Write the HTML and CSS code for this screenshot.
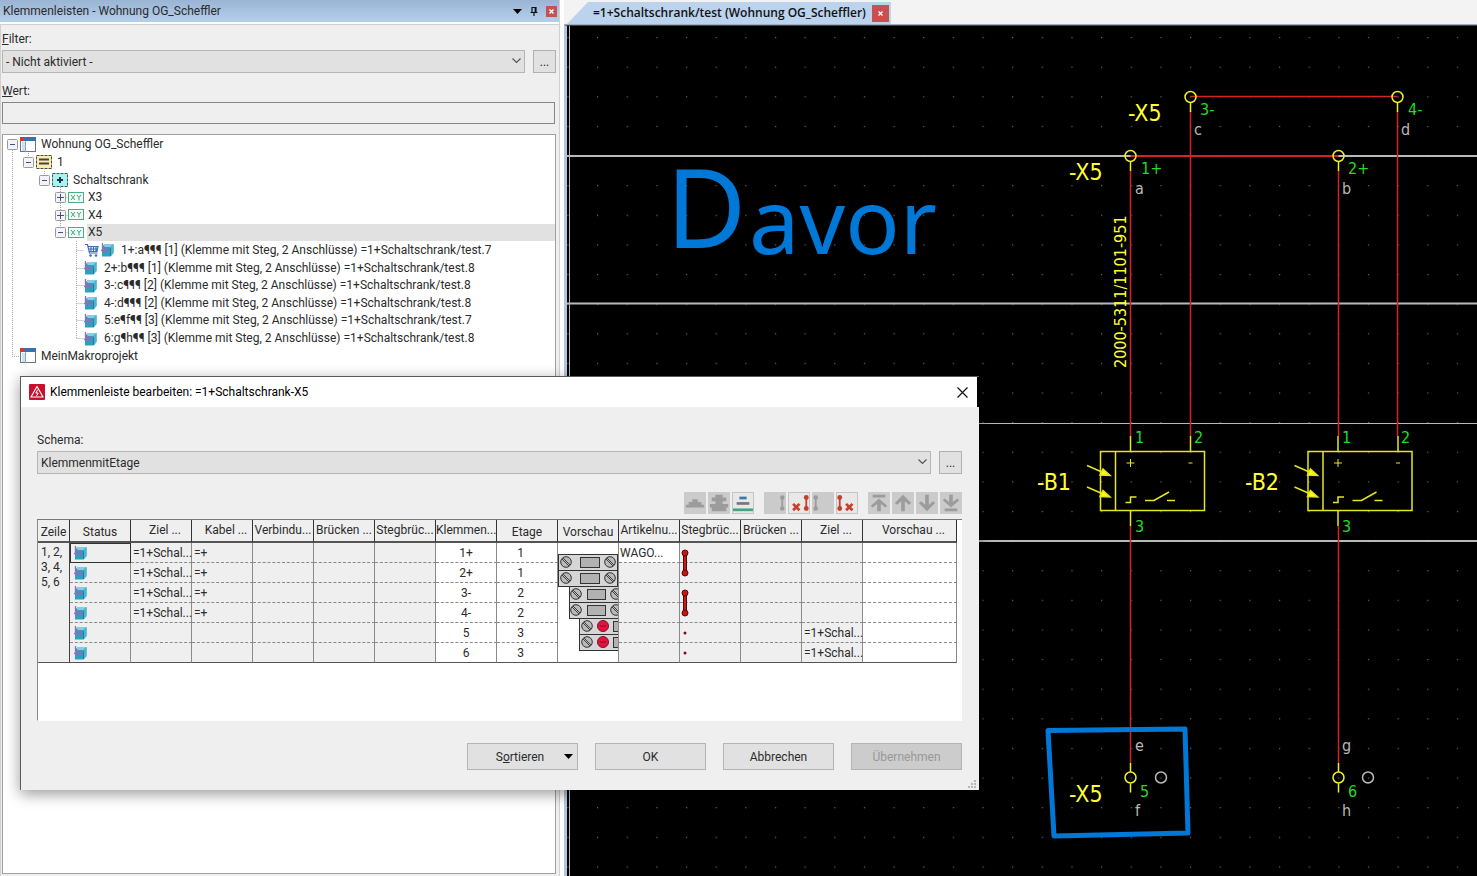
FILE: index.html
```html
<!DOCTYPE html>
<html lang="de">
<head>
    <meta charset="UTF-8">
    <meta name="viewport" content="width=device-width, initial-scale=1.0">
    <title>Klemmenleisten - Wohnung OG_Scheffler</title>
    <link rel="stylesheet" href="styles.css">
</head>
<body>
    <!-- Shared icons -->
    <svg class="sprite" aria-hidden="true">
        <symbol id="i-project" viewBox="0 0 16 16">
            <rect x="0.5" y="0.5" width="15" height="14" fill="#fff" stroke="#667686"/>
            <rect x="0" y="0" width="16" height="4" fill="#3a70ab"/>
            <rect x="0" y="0" width="4" height="4" fill="#d8392f"/>
            <rect x="2" y="5" width="3" height="9" fill="#cfe0f0"/>
            <path d="M5.5 4v11" stroke="#8fa6bb"/>
        </symbol>
        <symbol id="i-plant" viewBox="0 0 16 14">
            <rect x="0.5" y="0.5" width="15" height="13" fill="#fbedb0" stroke="#4c4c3c" stroke-dasharray="3 1"/>
            <path d="M3 4.500h10M3 8.500h10" stroke="#444" stroke-width="2"/>
        </symbol>
        <symbol id="i-place" viewBox="0 0 16 14">
            <rect x="0.500" y="0.500" width="15" height="13" fill="#a5f3f3" stroke="#3c5a5a" stroke-dasharray="3 1"/>
            <path d="M8 4v6M5 7h6" stroke="#234" stroke-width="2"/>
        </symbol>
        <symbol id="i-strip" viewBox="0 0 16 12">
            <rect x="0.500" y="0.500" width="15" height="10" fill="#f2fbf6" stroke="#45b083"/>
            <path d="M3 3l4 5M7 3l-4 5M9 3l2 2.500l2-2.500M11 5.500v3" stroke="#45a07b" fill="none"/>
        </symbol>
        <symbol id="i-block" viewBox="0 0 13 14">
            <path d="M1 4l3-3h8.500v9l-3 3.500H1z" fill="#2f9fc0"/>
            <path d="M4 1h8.500l-3 3H1z" fill="#7fd0e4"/>
            <path d="M9.500 4l3-3v9l-3 3.500z" fill="#4db5d2"/>
            <path d="M9.500 5v8" stroke="#1f7f9f"/>
            <path d="M1.500 0v8M0 7.500h8M4 4v5M6.500 4v5M1 2l3 3" stroke="#8a70b4" stroke-width="1.300" fill="none"/>
        </symbol>
        <symbol id="i-cart" viewBox="0 0 14 14">
            <path d="M0 1.500h2.500l2 8.500h8M3 3.500h10l-1 5H4.500M4 6h8.500M6 3.500v5M8.500 3.500v5M11 3.500v5" stroke="#3c6eb4" fill="none" stroke-width="1.200"/>
            <circle cx="5.500" cy="12.500" r="1.300" fill="#3c6eb4"/>
            <circle cx="11" cy="12.500" r="1.300" fill="#3c6eb4"/>
        </symbol>
        <symbol id="i-minus" viewBox="0 0 11 11">
            <rect x="0.500" y="0.500" width="10" height="10" rx="1" fill="#f4f4f4" stroke="#999"/>
            <path d="M3 5.500h5" stroke="#3d4f96"/>
        </symbol>
        <symbol id="i-plus" viewBox="0 0 11 11">
            <rect x="0.500" y="0.500" width="10" height="10" rx="1" fill="#f4f4f4" stroke="#999"/>
            <path d="M2 5.500h7M5.500 2v7" stroke="#3d4f96"/>
        </symbol>
        <symbol id="i-chevron" viewBox="0 0 9 6">
            <path d="M0.500 0.500l4 4l4-4" fill="none" stroke="#555" stroke-width="1.200"/>
        </symbol>
        <symbol id="i-screw" viewBox="0 0 12 12">
            <circle cx="6" cy="6" r="5.300" fill="#b9b9b9" stroke="#333"/>
            <path d="M2 3l7 7M3 2l7 7" stroke="#333" stroke-width="0.900"/>
        </symbol>
        <symbol id="i-bridge" viewBox="0 0 8 28">
            <path d="M4 4v20" stroke="#4a0808" stroke-width="4"/>
            <path d="M4 4v20" stroke="#d01616" stroke-width="2"/>
            <circle cx="4" cy="4" r="3" fill="#c81414" stroke="#5a0808"/>
            <circle cx="4" cy="24" r="3" fill="#c81414" stroke="#5a0808"/>
        </symbol>
        <symbol id="i-dot" viewBox="0 0 4 4">
            <circle cx="2" cy="2" r="1.500" fill="#7c0c18"/>
        </symbol>
    </svg>

    <aside class="panel">
        <header class="panel-title">
            <h2>Klemmenleisten - Wohnung OG_Scheffler</h2>
            <button type="button" class="title-btn" aria-label="Menü">
                <svg width="9" height="5" viewBox="0 0 9 5"><path d="M0 0h9L4.500 5z" fill="#000"/></svg>
            </button>
            <button type="button" class="title-btn" aria-label="Anheften">
                <svg width="8" height="9" viewBox="0 0 8 9"><path d="M2 5V0.500h4V5M5.200 0.500V5M0.500 5.500h7M4 5.500V9" stroke="#111" stroke-width="1.200" fill="none"/></svg>
            </button>
            <button type="button" class="close-red" aria-label="Schließen">
                <svg width="5" height="5" viewBox="0 0 5 5"><path d="M0.500 0.500l4 4M4.500 0.500l-4 4" stroke="#fff" stroke-width="1.400"/></svg>
            </button>
        </header>
        <div class="panel-body">
            <label for="filter"><u>F</u>ilter:</label>
            <div class="select-row">
                <div class="select">
                    <select id="filter">
                        <option>- Nicht aktiviert -</option>
                    </select>
                    <svg class="chevron" width="9" height="6"><use href="#i-chevron"/></svg>
                </div>
                <button type="button" class="more">...</button>
            </div>
            <label for="wert" class="wert-label"><u>W</u>ert:</label>
            <input type="text" id="wert" class="wert">

            <div class="tree">
                <svg class="tree-lines" width="90" height="228" viewBox="0 0 90 228">
                    <path d="M9.500 15v206.500h8M25.500 18v4M41.500 36v4M57.500 52v42M73.500 106v98M73.500 115.500h8M73.500 133.500h8M73.500 150.500h8M73.500 168.500h8M73.500 185.500h8M73.500 203.500h8M57.500 62.500h8M57.500 80.500h8M57.500 97.500h8" fill="none" stroke="#aaa" stroke-dasharray="1 1"/>
                </svg>
                <ul>
                    <li><svg class="exp"><use href="#i-minus"/></svg><svg class="ico"><use href="#i-project"/></svg><span>Wohnung OG_Scheffler</span></li>
                    <li class="d1"><svg class="exp"><use href="#i-minus"/></svg><svg class="ico"><use href="#i-plant"/></svg><span>1</span></li>
                    <li class="d2"><svg class="exp"><use href="#i-minus"/></svg><svg class="ico"><use href="#i-place"/></svg><span>Schaltschrank</span></li>
                    <li class="d3"><svg class="exp"><use href="#i-plus"/></svg><svg class="ico"><use href="#i-strip"/></svg><span>X3</span></li>
                    <li class="d3"><svg class="exp"><use href="#i-plus"/></svg><svg class="ico"><use href="#i-strip"/></svg><span>X4</span></li>
                    <li class="d3 selected"><svg class="exp"><use href="#i-minus"/></svg><svg class="ico"><use href="#i-strip"/></svg><span>X5</span></li>
                    <li class="leaf"><svg class="cart"><use href="#i-cart"/></svg><svg class="block"><use href="#i-block"/></svg><span>1+:a¶¶¶ [1] (Klemme mit Steg, 2 Anschlüsse) =1+Schaltschrank/test.7</span></li>
                    <li class="leaf"><svg class="block"><use href="#i-block"/></svg><span>2+:b¶¶¶ [1] (Klemme mit Steg, 2 Anschlüsse) =1+Schaltschrank/test.8</span></li>
                    <li class="leaf"><svg class="block"><use href="#i-block"/></svg><span>3-:c¶¶¶ [2] (Klemme mit Steg, 2 Anschlüsse) =1+Schaltschrank/test.8</span></li>
                    <li class="leaf"><svg class="block"><use href="#i-block"/></svg><span>4-:d¶¶¶ [2] (Klemme mit Steg, 2 Anschlüsse) =1+Schaltschrank/test.8</span></li>
                    <li class="leaf"><svg class="block"><use href="#i-block"/></svg><span>5:e¶f¶¶ [3] (Klemme mit Steg, 2 Anschlüsse) =1+Schaltschrank/test.7</span></li>
                    <li class="leaf"><svg class="block"><use href="#i-block"/></svg><span>6:g¶h¶¶ [3] (Klemme mit Steg, 2 Anschlüsse) =1+Schaltschrank/test.8</span></li>
                    <li class="closed"><svg class="ico"><use href="#i-project"/></svg><span>MeinMakroprojekt</span></li>
                </ul>
            </div>
        </div>
    </aside>

    <main class="editor">
        <div class="tabs">
            <div class="tab">
                <span>=1+Schaltschrank/test (Wohnung OG_Scheffler)</span>
                <button type="button" class="close-red tab-close" aria-label="Tab schließen">
                    <svg width="5" height="5" viewBox="0 0 5 5"><path d="M0.500 0.500l4 4M4.500 0.500l-4 4" stroke="#fff" stroke-width="1.200"/></svg>
                </button>
            </div>
        </div>
        <div class="canvas">
            <svg class="drawing" width="100%" height="100%">
                <defs>
                    <pattern id="grid" x="597" y="37" width="29.650" height="29.620" patternUnits="userSpaceOnUse">
                        <rect width="1.200" height="1.200" fill="#6a6a6a"/>
                    </pattern>
                    <g id="sensor" fill="none" stroke="#e6e61e" stroke-width="1.500">
                        <rect x="1100.500" y="451.500" width="104" height="59"/>
                        <path d="M1115.500 451v60M1130.500 436v15M1190.500 436v15M1130.500 511v15"/>
                        <path d="M1126.500 463h8M1130.500 459v8M1188.500 463h4" stroke-width="1"/>
                        <path d="M1125.500 502.500h5v-5.500h6M1145 500.500h9l15-8.500M1167 500.500h8"/>
                        <path d="M1087 465.500l16 7M1087 487l16 7"/>
                        <path d="M1103 469l7 6.500l-10-0.500zM1103 490.500l7 6.500l-10-0.500z" fill="#ff0"/>
                    </g>
                    <g id="pin" fill="none" stroke="#f0f028" stroke-width="1.500">
                        <circle r="5.500"/>
                        <path d="M0 6v9"/>
                    </g>
                </defs>
                <g transform="translate(-567 -26)">
                    <rect x="567" y="26" width="100%" height="100%" fill="url(#grid)"/>
                    <g class="rails">
                        <path d="M567 156h3000M567 303.500h3000M567 541h3000" stroke-width="2"/>
                        <path d="M567 423.500h3000M569.500 26v3000"/>
                    </g>
                    <g class="wires">
                        <path d="M1190.500 96.500h207"/>
                        <path d="M1130.500 156h208" stroke-width="2"/>
                        <path d="M1130.500 171v265M1190.500 111v325M1338.500 171v265M1397.500 111v325M1130.500 526v237M1338.500 526v237"/>
                    </g>
                    <g class="pins">
                        <use href="#pin" x="1190.500" y="97"/>
                        <use href="#pin" x="1397.500" y="97"/>
                        <use href="#pin" x="1130.500" y="156"/>
                        <use href="#pin" x="1338.500" y="156"/>
                        <use href="#pin" x="1130.500" y="777.500"/>
                        <use href="#pin" x="1338.500" y="777.500"/>
                        <path d="M1130.500 763v9M1338.500 763v9"/>
                        <circle cx="1161" cy="777.500" r="5.500"/>
                        <circle cx="1368" cy="777.500" r="5.500"/>
                    </g>
                    <use href="#sensor"/>
                    <use href="#sensor" x="207.500"/>
                    <g class="tags">
                        <text x="1128" y="121">-X5</text>
                        <text x="1069" y="180">-X5</text>
                        <text x="1037" y="490">-B1</text>
                        <text x="1245" y="490">-B2</text>
                        <text x="1069" y="802">-X5</text>
                        <text class="part" transform="translate(1126 368) rotate(-90)">2000-5311/1101-951</text>
                    </g>
                    <g class="numbers">
                        <text x="1200" y="115">3-</text>
                        <text x="1408" y="115">4-</text>
                        <text x="1141" y="174">1+</text>
                        <text x="1348" y="174">2+</text>
                        <text x="1135" y="443">1</text>
                        <text x="1194" y="443">2</text>
                        <text x="1342" y="443">1</text>
                        <text x="1401" y="443">2</text>
                        <text x="1135" y="532">3</text>
                        <text x="1342" y="532">3</text>
                        <text x="1140" y="797">5</text>
                        <text x="1348" y="797">6</text>
                    </g>
                    <g class="letters">
                        <text x="1194" y="135">c</text>
                        <text x="1401" y="135">d</text>
                        <text x="1135" y="194">a</text>
                        <text x="1342" y="194">b</text>
                        <text x="1135" y="751">e</text>
                        <text x="1342" y="751">g</text>
                        <text x="1135" y="816">f</text>
                        <text x="1342" y="816">h</text>
                    </g>
                    <path class="marker" d="M1048 730.500L1185 729l3 104l-134 3z"/>
                    <text class="note" x="666" y="248">D<tspan class="note-small" x="749" y="254">avor</tspan></text>
                </g>
            </svg>
        </div>
    </main>

    <section class="dialog" role="dialog" aria-labelledby="dialog-title">
        <header class="dialog-title">
            <svg width="16" height="16" viewBox="0 0 16 16">
                <rect width="16" height="16" rx="1" fill="#c8102e"/>
                <path d="M8 2.500l6 10.500H2z" fill="none" stroke="#fff" stroke-width="1.100"/>
                <path d="M8.800 5.500l-2 3.500h2.400l-1.700 3" fill="none" stroke="#fff"/>
            </svg>
            <h1 id="dialog-title">Klemmenleiste bearbeiten: =1+Schaltschrank-X5</h1>
            <button type="button" class="title-btn" aria-label="Schließen">
                <svg width="11" height="11" viewBox="0 0 11 11"><path d="M0.500 0.500l10 10M10.500 0.500l-10 10" stroke="#111" stroke-width="1.200"/></svg>
            </button>
        </header>
        <div class="dialog-body">
            <label for="schema">Schema:</label>
            <div class="select-row">
                <div class="select">
                    <select id="schema">
                        <option>KlemmenmitEtage</option>
                    </select>
                    <svg class="chevron" width="9" height="6"><use href="#i-chevron"/></svg>
                </div>
                <button type="button" class="more">...</button>
            </div>

            <div class="toolbar">
                <div class="group">
                    <button type="button" aria-label="Etage" disabled><svg viewBox="0 0 22 22"><path d="M1 13h20v3H1zM4 10h14v3H4zM8 7h6v3H8z"/></svg></button>
                    <button type="button" aria-label="Etagen" disabled><svg viewBox="0 0 22 22"><path d="M7 2h8v3h4v4h-4v3h6v4h-2v4H3v-4H1v-4h6V9H3V5h4z"/></svg></button>
                    <button type="button" aria-label="Mehrstock"><svg viewBox="0 0 22 22"><path d="M7 4h8v3H7z" fill="#3a78b0"/><path d="M4 10h14v3H4z" fill="#777"/><path d="M0 17h22v3H0z" fill="#3fa684"/></svg></button>
                </div>
                <div class="group">
                    <button type="button" aria-label="Brücke links" disabled><svg viewBox="0 0 22 22"><circle cx="19" cy="5" r="2.500"/><circle cx="19" cy="17" r="2.500"/><path d="M18 5h2v12h-2z"/></svg></button>
                    <button type="button" aria-label="Brücke links löschen"><svg viewBox="0 0 22 22" fill="#c4402c"><circle cx="19" cy="5" r="2.700"/><circle cx="19" cy="17" r="2.700"/><path d="M18 5h2v12h-2z"/><path d="M4.500 12l7 7M11.500 12l-7 7" stroke="#c4402c" stroke-width="3"/></svg></button>
                    <button type="button" aria-label="Brücke rechts" disabled><svg viewBox="0 0 22 22"><circle cx="3" cy="5" r="2.500"/><circle cx="3" cy="17" r="2.500"/><path d="M2 5h2v12H2z"/></svg></button>
                    <button type="button" aria-label="Brücke rechts löschen"><svg viewBox="0 0 22 22" fill="#c4402c"><circle cx="3" cy="5" r="2.700"/><circle cx="3" cy="17" r="2.700"/><path d="M2 5h2v12H2z"/><path d="M10 12l7 7M17 12l-7 7" stroke="#c4402c" stroke-width="3"/></svg></button>
                </div>
                <div class="group">
                    <button type="button" aria-label="Ganz nach oben" disabled><svg viewBox="0 0 22 22"><path d="M4 2h14v3H4zM11 6l9 8l-2 2l-5-4v8H9v-8l-5 4l-2-2z"/></svg></button>
                    <button type="button" aria-label="Nach oben" disabled><svg viewBox="0 0 22 22"><path d="M11 2l9 9l-2.500 2l-4.500-4v11H9V9l-4.500 4L2 11z"/></svg></button>
                    <button type="button" aria-label="Nach unten" disabled><svg viewBox="0 0 22 22"><path d="M11 20l9-9l-2.500-2l-4.500 4V2H9v11L4.500 9L2 11z"/></svg></button>
                    <button type="button" aria-label="Ganz nach unten" disabled><svg viewBox="0 0 22 22"><path d="M4 17h14v3H4zM11 16l9-8l-2-2l-5 4V2H9v8L4 6L2 8z"/></svg></button>
                </div>
            </div>

            <div class="table-box">
                <table>
                    <colgroup>
                        <col class="c-line"><col span="13" class="c-std"><col>
                    </colgroup>
                    <thead>
                        <tr>
                            <th class="one">Zeile</th>
                            <th class="one">Status</th>
                            <th class="short">Ziel ...</th>
                            <th class="short">Kabel ...</th>
                            <th>Verbindu...</th>
                            <th>Brücken ...</th>
                            <th>Stegbrüc...</th>
                            <th>Klemmen...</th>
                            <th class="one">Etage</th>
                            <th class="one">Vorschau</th>
                            <th>Artikelnu...</th>
                            <th>Stegbrüc...</th>
                            <th>Brücken ...</th>
                            <th class="short">Ziel ...</th>
                            <th class="short">Vorschau ...</th>
                        </tr>
                    </thead>
                    <tbody>
                        <tr>
                            <td class="lines" rowspan="6">1, 2,<br>3, 4,<br>5, 6</td>
                            <td class="focus"><svg class="block"><use href="#i-block"/></svg></td><td>=1+Schal...</td><td>=+</td><td></td><td></td><td></td>
                            <td class="num">1+</td><td class="num level">1</td>
                            <td class="preview" rowspan="6">
                                <svg width="60" height="118" viewBox="0 0 60 118">
                                    <g fill="#d6d6d6" stroke="#333">
                                        <rect x="0.500" y="11.500" width="59" height="16"/>
                                        <rect x="0.500" y="27.500" width="59" height="16"/>
                                        <rect x="11.500" y="43.500" width="59" height="16"/>
                                        <rect x="11.500" y="59.500" width="59" height="16"/>
                                        <rect x="21.500" y="75.500" width="59" height="16"/>
                                        <rect x="21.500" y="91.500" width="59" height="16"/>
                                    </g>
                                    <g fill="#b2b2b2" stroke="#333">
                                        <rect x="22.500" y="14.500" width="19" height="10"/>
                                        <rect x="22.500" y="30.500" width="19" height="10"/>
                                        <rect x="29.500" y="46.500" width="18" height="10"/>
                                        <rect x="29.500" y="62.500" width="18" height="10"/>
                                        <rect x="55.500" y="78.500" width="18" height="10"/>
                                        <rect x="55.500" y="94.500" width="18" height="10"/>
                                    </g>
                                    <g>
                                        <use href="#i-screw" x="2" y="13" width="12" height="12"/><use href="#i-screw" x="46" y="13" width="12" height="12"/>
                                        <use href="#i-screw" x="2" y="29" width="12" height="12"/><use href="#i-screw" x="46" y="29" width="12" height="12"/>
                                        <use href="#i-screw" x="12" y="45" width="12" height="12"/><use href="#i-screw" x="52" y="45" width="12" height="12"/>
                                        <use href="#i-screw" x="12" y="61" width="12" height="12"/><use href="#i-screw" x="52" y="61" width="12" height="12"/>
                                        <use href="#i-screw" x="23" y="77" width="12" height="12"/>
                                        <use href="#i-screw" x="23" y="93" width="12" height="12"/>
                                    </g>
                                    <g fill="#e0143c" stroke="#8a0c24">
                                        <circle cx="45" cy="83" r="5.500"/><path d="M42 83h6"/>
                                        <circle cx="45" cy="99" r="5.500"/><path d="M42 99h6"/>
                                    </g>
                                </svg>
                            </td>
                            <td class="open">WAGO...</td>
                            <td class="bridge"><svg width="8" height="28"><use href="#i-bridge"/></svg></td>
                            <td></td><td></td><td class="open"></td>
                        </tr>
                        <tr>
                            <td><svg class="block"><use href="#i-block"/></svg></td><td>=1+Schal...</td><td>=+</td><td></td><td></td><td></td>
                            <td class="num">2+</td><td class="num level">1</td><td></td><td></td><td></td><td></td><td class="open"></td>
                        </tr>
                        <tr>
                            <td><svg class="block"><use href="#i-block"/></svg></td><td>=1+Schal...</td><td>=+</td><td></td><td></td><td></td>
                            <td class="num">3-</td><td class="num level">2</td><td></td>
                            <td class="bridge"><svg width="8" height="28"><use href="#i-bridge"/></svg></td>
                            <td></td><td></td><td class="open"></td>
                        </tr>
                        <tr>
                            <td><svg class="block"><use href="#i-block"/></svg></td><td>=1+Schal...</td><td>=+</td><td></td><td></td><td></td>
                            <td class="num">4-</td><td class="num level">2</td><td></td><td></td><td></td><td></td><td class="open"></td>
                        </tr>
                        <tr>
                            <td><svg class="block"><use href="#i-block"/></svg></td><td></td><td></td><td></td><td></td><td></td>
                            <td class="num">5</td><td class="num level">3</td><td></td>
                            <td><svg class="dot"><use href="#i-dot"/></svg></td><td></td><td>=1+Schal...</td><td class="open"></td>
                        </tr>
                        <tr>
                            <td><svg class="block"><use href="#i-block"/></svg></td><td></td><td></td><td></td><td></td><td></td>
                            <td class="num">6</td><td class="num level">3</td><td></td>
                            <td><svg class="dot"><use href="#i-dot"/></svg></td><td></td><td>=1+Schal...</td><td class="open"></td>
                        </tr>
                    </tbody>
                </table>
            </div>

            <footer class="actions">
                <button type="button" class="btn sort">
                    <span>S<u>o</u>rtieren</span>
                    <svg width="9" height="5" viewBox="0 0 9 5"><path d="M0 0h9L4.500 5z" fill="#000"/></svg>
                </button>
                <button type="button" class="btn">OK</button>
                <button type="button" class="btn">Abbrechen</button>
                <button type="button" class="btn" disabled>Übernehmen</button>
            </footer>
        </div>
        <svg class="grip" width="9" height="9" viewBox="0 0 9 9"><path d="M6 0h2v2H6zM3 3h2v2H3zM6 3h2v2H6zM0 6h2v2H0zM3 6h2v2H3zM6 6h2v2H6z" fill="#b8b8b8"/></svg>
    </section>
</body>
</html>
```

FILE: styles.css
```css
* {
    margin: 0;
    padding: 0;
    box-sizing: border-box;
}
body {
    display: flex;
    min-height: 100vh;
    position: relative;
    overflow: hidden;
    background: #fff;
    color: #2b2b2b;
    font-family: Roboto, "Noto Sans", sans-serif;
    font-size: 12px;
    line-height: 16px;
}
button, input, select {
    font: inherit;
    color: inherit;
}
svg {
    display: block;
    flex: none;
}
.sprite {
    position: absolute;
    width: 0;
    height: 0;
}
h1, h2 {
    font-size: 12px;
    font-weight: normal;
    flex: 1;
}

/* left panel */
.panel {
    flex: 0 0 560px;
    display: flex;
    flex-direction: column;
    background: #efefef;
    border-right: 1px solid #d0d0d0;
}
.panel-title {
    display: flex;
    align-items: center;
    gap: 8px;
    height: 24px;
    padding: 0 2px 0 3px;
    background: linear-gradient(#9ab4d4, #b6cfec);
    border-bottom: 2px solid #fff;
}
.title-btn {
    display: flex;
    border: none;
    background: none;
}
.close-red {
    display: flex;
    align-items: center;
    justify-content: center;
    width: 11px;
    height: 11px;
    border: none;
    background: #c75050;
}
.panel-body {
    flex: 1;
    display: flex;
    flex-direction: column;
    padding: 6px 3px 2px 1px;
    border-top: 1px solid #d0d0d0;
    border-left: 1px solid #d0d0d0;
}
.select-row {
    display: flex;
    gap: 8px;
    align-items: flex-start;
}
.panel-body .select-row {
    margin: 3px 0 10px;
}
.select {
    flex: 1;
    position: relative;
}
.select select {
    display: block;
    width: 100%;
    height: 23px;
    padding: 0 3px;
    border: 1px solid #b5b5b5;
    background: #e1e1e1;
    appearance: none;
}
.chevron {
    position: absolute;
    right: 4px;
    top: 8px;
}
.more {
    width: 23px;
    height: 23px;
    border: 1px solid #b0b0b0;
    background: #e1e1e1;
}
.wert {
    height: 22px;
    margin: 3px 1px 10px 0;
    border: 1px solid #868686;
    background: #efefef;
}

/* tree */
.tree {
    flex: 1;
    position: relative;
    border: 1px solid #a0a0a0;
    background: #fff;
}
.tree-lines {
    position: absolute;
    left: 0;
    top: 0;
}
.tree ul {
    position: relative;
    display: grid;
    grid-template-rows: repeat(13, 1fr);
    height: 229px;
    margin-top: 1px;
    list-style: none;
}
.tree li {
    display: flex;
    align-items: center;
    padding-left: 4px;
    white-space: nowrap;
}
.exp {
    width: 11px;
    height: 11px;
    margin-right: 2px;
}
.ico {
    width: 16px;
    height: 16px;
    margin-right: 4px;
}
.tree li.d1 { padding-left: 20px; }
.tree li.d2 { padding-left: 36px; }
.tree li.d3 { padding-left: 52px; }
.tree li.d3 .ico { margin-right: 3px; }
.tree li.closed { padding-left: 17px; }
.tree li.leaf { padding-left: 81px; }
.tree li span {
    line-height: 17px;
    padding-left: 1px;
}
.selected span {
    flex: 1;
    background: #e1e1e1;
}
.block {
    width: 13px;
    height: 14px;
}
.leaf .block {
    margin-right: 6px;
}
.cart {
    width: 14px;
    height: 14px;
    margin: 0 2px 0 1px;
}

/* drawing area */
.editor {
    flex: 1;
    display: flex;
    flex-direction: column;
    min-width: 0;
    margin-left: 4px;
}
.tabs {
    height: 25px;
    padding-top: 2px;
    background: #f3f3f3;
    border-bottom: 1px solid #9aaec6;
}
.tab {
    display: inline-flex;
    align-items: center;
    gap: 6px;
    height: 22px;
    padding: 0 2px 0 29px;
    background: #bcd3ee;
    clip-path: polygon(24px 0, 100% 0, 100% 100%, 3px 100%);
    color: #111;
    font-family: "Open Sans", "Noto Sans", sans-serif;
    font-weight: 600;
}
.tab-close {
    width: 17px;
    height: 17px;
}
.canvas {
    flex: 1;
    border-left: 3px solid #b4c6dc;
    border-top: 1px solid #444;
    background: #000;
    overflow: hidden;
    position: relative;
}
.drawing {
    position: absolute;
    inset: 0;
    font-family: "DejaVu Sans Condensed", "DejaVu Sans", sans-serif;
    font-size: 16px;
}
.rails { stroke: #b9b9b9; }
.wires { stroke: #d62222; stroke-width: 1.5; }
.pins { stroke-width: 1.5; fill: none; }
.pins > path { stroke: #f0f028; }
.pins > circle { stroke: #b9b9b9; }
.tags { fill: #ffff32; font-size: 23px; }
.tags .part { font-size: 16px; }
.numbers { fill: #22dd22; }
.letters { fill: #b9b9b9; }
.marker {
    fill: none;
    stroke: #0078d7;
    stroke-width: 5;
    stroke-linejoin: round;
}
.note {
    fill: #0078d7;
    font-family: "Noto Sans", sans-serif;
    font-size: 110px;
}
.note-small { font-size: 90px; }

/* dialog */
.dialog {
    position: absolute;
    left: 20px;
    top: 376px;
    width: 959px;
    border-top: 1px solid #5a5a5a;
    border-left: 1px solid #5a5a5a;
    box-shadow: 0 4px 14px rgba(0, 0, 0, 0.4);
}
.dialog-title {
    display: flex;
    align-items: center;
    gap: 5px;
    height: 30px;
    margin-right: 2px;
    padding: 0 9px 0 8px;
    background: #fff;
    color: #000;
}
.dialog-body {
    padding: 25px 17px 20px 16px;
    background: #efefef;
}
.dialog-body .select-row {
    margin: 3px 0 18px;
}
.toolbar {
    display: flex;
    justify-content: flex-end;
    gap: 10px;
}
.group {
    display: flex;
    gap: 2px;
}
.group button {
    width: 22px;
    height: 22px;
    border: 1px solid #c4c4c4;
    background: #e8e8e8;
}
.group button:disabled {
    border-color: #cbcbcb;
    background: #cbcbcb;
    fill: #9c9c9c;
}
.group svg {
    width: 20px;
    height: 20px;
}
.table-box {
    height: 202px;
    margin-top: 5px;
    border-top: 1px solid #777;
    border-left: 1px solid #888;
    border-bottom: 1px solid #fff;
    background: #fff;
}
table {
    width: calc(100% - 5px);
    table-layout: fixed;
    border-spacing: 0;
}
.c-line { width: 32px; }
.c-std { width: 61px; }
th {
    height: 23px;
    padding-bottom: 2px;
    background: #efefef;
    border-right: 1px solid #333;
    border-bottom: 2px solid #555;
    line-height: 18px;
    font-weight: normal;
    text-align: center;
    white-space: nowrap;
}
th.one {
    padding: 2px 0 0;
}
th.short {
    padding-left: 8px;
}
td {
    height: 20px;
    padding-left: 2px;
    background: #efefef;
    border-right: 1px solid #8a8a8a;
    border-bottom: 1px dashed #8a8a8a;
    white-space: nowrap;
}
tr:last-child td,
td[rowspan="6"] {
    border-bottom: 1px solid #555;
}
td.lines {
    padding: 2px 0 0 3px;
    border-right-color: #444;
    line-height: 15px;
    vertical-align: top;
}
td.focus {
    outline: 1px solid #333;
    outline-offset: -1px;
}
td .block {
    margin-left: 2px;
}
td.num {
    background: #fff;
    padding: 0;
    text-align: center;
}
td.level {
    padding-right: 13px;
}
td.open {
    background: #fff;
    padding-left: 1px;
}
td.preview {
    background: #fff;
    padding: 0;
    vertical-align: top;
}
td.bridge {
    position: relative;
}
/* the bridge reaches over into the next row */
td.bridge svg {
    position: absolute;
    left: 1px;
    top: 6px;
    z-index: 1;
}
.dot {
    width: 4px;
    height: 4px;
    margin-left: 1px;
}
.actions {
    display: flex;
    justify-content: flex-end;
    gap: 17px;
    margin-top: 22px;
}
.btn {
    width: 111px;
    height: 27px;
    border: 1px solid #b4b4b4;
    background: #e1e1e1;
}
.btn:disabled {
    background: #cccccc;
    color: #989898;
}
.sort {
    display: flex;
    align-items: center;
    padding-right: 4px;
}
.sort span {
    flex: 1;
    padding-left: 8px;
}
.grip {
    position: absolute;
    right: 2px;
    bottom: 1px;
}
```
